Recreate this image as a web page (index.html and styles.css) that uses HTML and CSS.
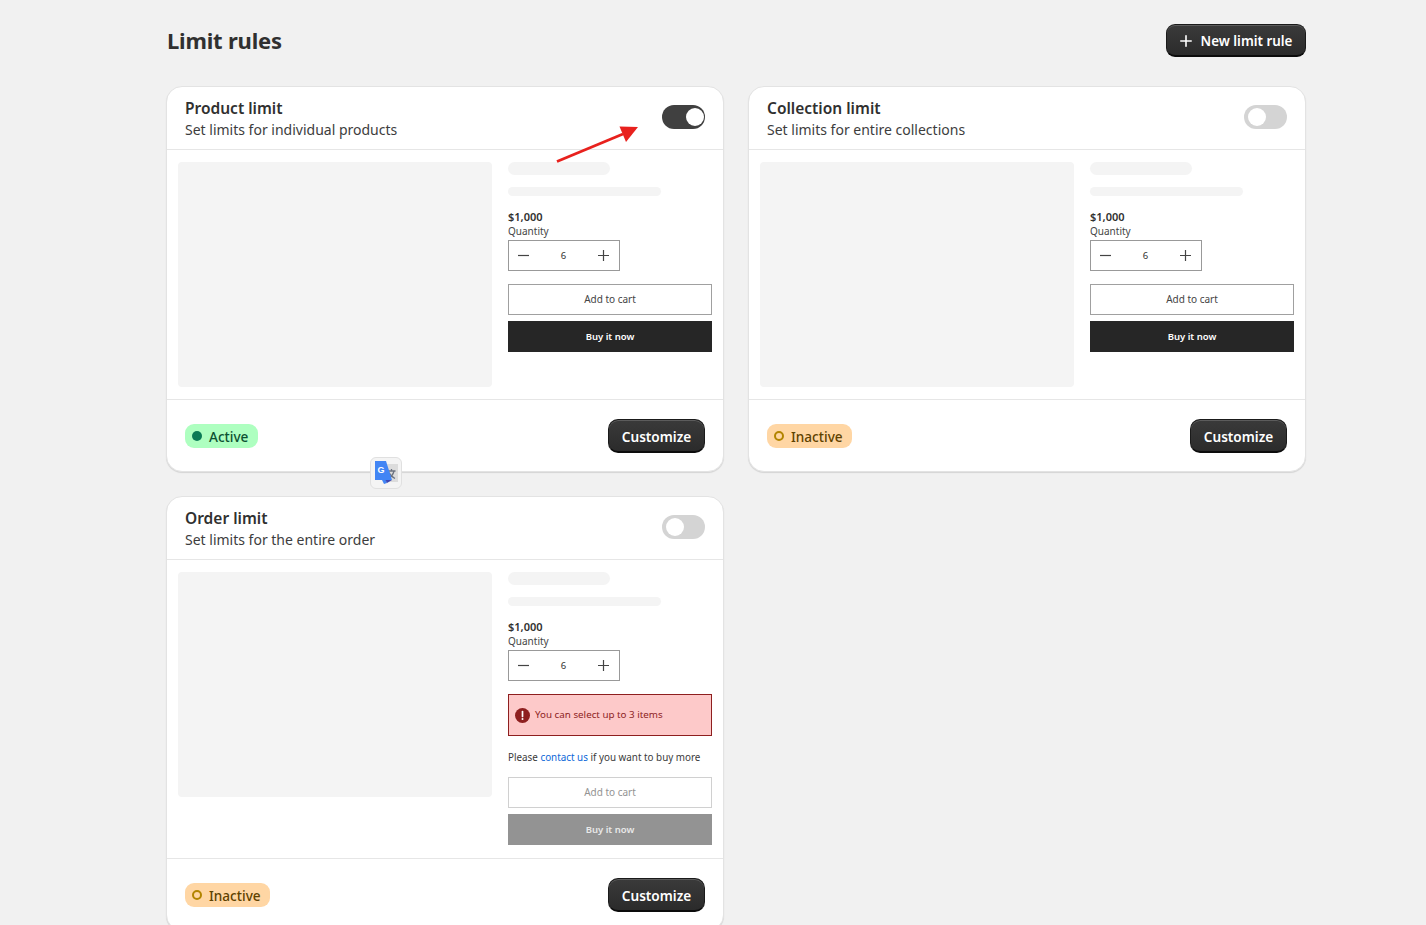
FILE: index.html
```html
<!DOCTYPE html>
<html lang="en">
<head>
  <meta charset="UTF-8" />
  <meta name="viewport" content="width=device-width, initial-scale=1.0"/>
  <title>Limit rules</title>
  <link rel="stylesheet" href="styles.css">
</head>
<body>
  <div class="page">
    <div class="topbar">
      <h1>Limit rules</h1>
      <button class="btn-dark btn-new">
        <svg class="plus-icon" width="12" height="12" viewBox="0 0 12 12"><path d="M6 .8v10.400M.8 6h10.400" stroke="#fff" stroke-width="1.600" stroke-linecap="round"/></svg>
        New limit rule
      </button>
    </div>

    <div class="cards">
      <!-- Product limit -->
      <div class="card">
        <div class="card-head">
          <div class="head-text">
            <h2>Product limit</h2>
            <p>Set limits for individual products</p>
          </div>
          <span class="toggle on"></span>
        </div>
        <div class="card-body">
          <div class="thumb"></div>
          <div class="info">
            <div class="skel skel-a"></div>
            <div class="skel skel-b"></div>
            <div class="price">$1,000</div>
            <div class="qty-label">Quantity</div>
            <div class="qty">
              <svg width="11" height="11" viewBox="0 0 11 11"><path d="M0 5.500h11" stroke="#444" stroke-width="1.200"/></svg>
              <span>6</span>
              <svg width="11" height="11" viewBox="0 0 11 11"><path d="M0 5.500h11M5.500 0v11" stroke="#444" stroke-width="1.200"/></svg>
            </div>
            <div class="shop-btn add">Add to cart</div>
            <div class="shop-btn buy">Buy it now</div>
          </div>
        </div>
        <div class="card-foot">
          <span class="badge active"><i></i>Active</span>
          <button class="btn-dark btn-custom">Customize</button>
        </div>
      </div>

      <!-- Collection limit -->
      <div class="card">
        <div class="card-head">
          <div class="head-text">
            <h2>Collection limit</h2>
            <p>Set limits for entire collections</p>
          </div>
          <span class="toggle"></span>
        </div>
        <div class="card-body">
          <div class="thumb"></div>
          <div class="info">
            <div class="skel skel-a"></div>
            <div class="skel skel-b"></div>
            <div class="price">$1,000</div>
            <div class="qty-label">Quantity</div>
            <div class="qty">
              <svg width="11" height="11" viewBox="0 0 11 11"><path d="M0 5.500h11" stroke="#444" stroke-width="1.200"/></svg>
              <span>6</span>
              <svg width="11" height="11" viewBox="0 0 11 11"><path d="M0 5.500h11M5.500 0v11" stroke="#444" stroke-width="1.200"/></svg>
            </div>
            <div class="shop-btn add">Add to cart</div>
            <div class="shop-btn buy">Buy it now</div>
          </div>
        </div>
        <div class="card-foot">
          <span class="badge inactive"><i></i>Inactive</span>
          <button class="btn-dark btn-custom">Customize</button>
        </div>
      </div>

      <!-- Order limit -->
      <div class="card">
        <div class="card-head">
          <div class="head-text">
            <h2>Order limit</h2>
            <p>Set limits for the entire order</p>
          </div>
          <span class="toggle"></span>
        </div>
        <div class="card-body">
          <div class="thumb"></div>
          <div class="info">
            <div class="skel skel-a"></div>
            <div class="skel skel-b"></div>
            <div class="price">$1,000</div>
            <div class="qty-label">Quantity</div>
            <div class="qty">
              <svg width="11" height="11" viewBox="0 0 11 11"><path d="M0 5.500h11" stroke="#444" stroke-width="1.200"/></svg>
              <span>6</span>
              <svg width="11" height="11" viewBox="0 0 11 11"><path d="M0 5.500h11M5.500 0v11" stroke="#444" stroke-width="1.200"/></svg>
            </div>
            <div class="error">
              <svg width="15" height="15" viewBox="0 0 15 15"><circle cx="7.500" cy="7.500" r="7.500" fill="#8e1f1f"/><path d="M7.500 3.500v5" stroke="#fff" stroke-width="1.700" stroke-linecap="round"/><circle cx="7.500" cy="11" r="1" fill="#fff"/></svg>
              <span class="error-text">You can select up to 3 items</span>
            </div>
            <div class="contact-note">Please <a href="#">contact us</a> if you want to buy more</div>
            <div class="shop-btn add disabled">Add to cart</div>
            <div class="shop-btn buy disabled">Buy it now</div>
          </div>
        </div>
        <div class="card-foot">
          <span class="badge inactive"><i></i>Inactive</span>
          <button class="btn-dark btn-custom">Customize</button>
        </div>
      </div>
    </div>

    <!-- annotation arrow -->
    <svg class="arrow" width="90" height="42" viewBox="0 0 90 42">
      <path d="M2 38.500L68 11" stroke="#e8211d" stroke-width="2.800"/>
      <path d="M83 4L64.500 3.500L71 19Z" fill="#e8211d"/>
    </svg>

    <!-- translate extension bubble -->
    <div class="translate">
      <svg width="24" height="26" viewBox="0 0 24 26">
        <rect x="11" y="4" width="13" height="18" fill="#dcdcdc"/>
        <path d="M17.500 9v1.500M13.500 11h8M20 11c-.8 3.500-3 6-6 7.500M15 12.500c1 2.500 3 4.500 6 6" stroke="#6b7280" stroke-width="1.300" fill="none"/>
        <path d="M1 1h11l6 19H12l1 3-3 1-2-4H1z" fill="#4285f4"/>
        <path d="M13 23l-1.500-3H18z" fill="#3b46b5"/>
        <text x="3.500" y="13" class="translate-g">G</text>
      </svg>
    </div>
  </div>
</body>
</html>
```

FILE: styles.css
```css
* {
  box-sizing: border-box;
}

html, body {
  margin: 0;
  height: 925px;
  overflow: hidden;
}

body {
  font-family: "Noto Sans", "Open Sans", Arial, sans-serif;
  background-color: #f1f1f1;
  color: #303030;
}

.page {
  position: relative;
  height: 925px;
  overflow: hidden;
  padding: 24px 120px 0 166px;
}

.topbar {
  display: flex;
  justify-content: space-between;
  align-items: center;
  height: 33px;
  margin-bottom: 29px;
}

.topbar h1 {
  margin: 0 0 2px 1px;
  font-size: 22px;
  font-weight: 700;
  letter-spacing: -0.2px;
  color: #303030;
}

.btn-dark {
  font-family: inherit;
  font-weight: 600;
  color: #fff;
  background: linear-gradient(#3a3a3a, #2b2b2b);
  border: 1px solid #1a1a1a;
  border-bottom: 2px solid #0c0c0c;
  box-shadow: inset 0 1px 0 #5c5c5c;
  cursor: pointer;
  padding: 1px 0 0;
}

.btn-new {
  display: flex;
  align-items: center;
  justify-content: center;
  gap: 9px;
  width: 140px;
  height: 33px;
  border-radius: 9px;
  font-size: 13.400px;
}

.cards {
  display: grid;
  grid-template-columns: 558px 558px;
  gap: 24px;
  align-items: start;
}

.card {
  background: #fff;
  border: 1px solid #e3e3e3;
  border-radius: 16px;
  box-shadow: 0 1px 1px rgba(0, 0, 0, 0.12);
}

.card-head {
  display: flex;
  justify-content: space-between;
  align-items: center;
  height: 63px;
  padding: 0 18px;
  border-bottom: 1px solid #e6e6e6;
}

.head-text {
  padding-top: 2px;
}

.card-head h2 {
  margin: 0;
  font-size: 15.500px;
  line-height: 21px;
  font-weight: 600;
  color: #303030;
}

.card-head p {
  margin: 1px 0 0;
  font-size: 14px;
  line-height: 20px;
  color: #3d3d3d;
}

.toggle {
  position: relative;
  display: block;
  width: 43px;
  height: 24px;
  margin-bottom: 2px;
  border-radius: 12px;
  background: #d4d4d4;
}

.toggle::after {
  content: "";
  position: absolute;
  top: 3px;
  left: 4px;
  width: 18px;
  height: 18px;
  border-radius: 50%;
  background: #fff;
}

.toggle.on {
  background: #404040;
}

.toggle.on::after {
  left: 24px;
}

.card-body {
  display: flex;
  gap: 16px;
  padding: 12px 11px;
  border-bottom: 1px solid #e6e6e6;
}

.thumb {
  width: 314px;
  height: 225px;
  flex: none;
  border-radius: 4px;
  background: #f4f4f4;
}

.info {
  flex: 1;
  padding-bottom: 1px;
}

.skel {
  background: #f4f4f4;
}

.skel-a {
  width: 102px;
  height: 13px;
  border-radius: 7px;
  margin-bottom: 12px;
}

.skel-b {
  width: 153px;
  height: 9px;
  border-radius: 5px;
  margin-bottom: 13px;
}

.price {
  font-size: 11px;
  line-height: 16px;
  font-weight: 600;
  color: #303030;
}

.qty-label {
  font-size: 10px;
  line-height: 12px;
  margin-bottom: 3px;
  color: #444;
}

.qty {
  display: flex;
  justify-content: space-between;
  align-items: center;
  width: 112px;
  height: 31px;
  padding: 0 10px 0 9px;
  border: 1px solid #999;
  font-size: 9.500px;
  color: #333;
}

.shop-btn {
  display: flex;
  align-items: center;
  justify-content: center;
  width: 204px;
  height: 31px;
  font-size: 10px;
}

.add {
  margin-top: 13px;
  padding-bottom: 2px;
  border: 1px solid #a0a0a0;
  color: #444;
}

.buy {
  margin-top: 6px;
  background: #262626;
  color: #fff;
  font-size: 9.500px;
  font-weight: 600;
}

.add.disabled {
  margin-top: 13px;
  border-color: #d0d0d0;
  color: #939393;
}

.buy.disabled {
  background: #939393;
  color: #e8e8e8;
}

.error {
  display: flex;
  align-items: center;
  gap: 5px;
  width: 204px;
  height: 42px;
  margin-top: 13px;
  padding-left: 6px;
  background: #fdc9c9;
  border: 1px solid #8e1f1f;
  font-size: 9.800px;
  color: #8e1f1f;
}

.error-text {
  margin-bottom: 2px;
}

.contact-note {
  margin-top: 14px;
  font-size: 9.850px;
  line-height: 14px;
  white-space: nowrap;
  color: #3a3a3a;
}

.contact-note a {
  color: #0a66d8;
  text-decoration: none;
}

.card-foot {
  display: flex;
  justify-content: space-between;
  align-items: center;
  height: 71px;
  padding: 0 18px;
}

.badge {
  display: flex;
  align-items: center;
  height: 24px;
  padding: 1px 10px 0 7px;
  border-radius: 9px;
  font-size: 13.600px;
  font-weight: 500;
}

.badge i {
  display: block;
  width: 10px;
  height: 10px;
  margin-top: -1px;
  margin-right: 7px;
  border-radius: 50%;
}

.badge.active {
  background: #aeffc0;
  color: #0c5132;
}

.badge.active i {
  background: #0b7a55;
}

.badge.inactive {
  padding-right: 9px;
  background: #ffd6a4;
  color: #5e4200;
}

.badge.inactive i {
  border: 2px solid #b28400;
}

.btn-custom {
  width: 97px;
  height: 34px;
  padding-top: 2px;
  border-radius: 10px;
  font-size: 13.600px;
}

.arrow {
  position: absolute;
  left: 555px;
  top: 123px;
}

.translate {
  position: absolute;
  left: 370px;
  top: 457px;
  display: flex;
  align-items: center;
  justify-content: center;
  width: 32px;
  height: 32px;
  border: 1px solid #e0e0e0;
  border-radius: 6px;
  background: #f4f4f4;
}

.translate-g {
  font-family: "Liberation Sans", Arial, sans-serif;
  font-size: 9px;
  font-weight: 700;
  fill: #fff;
}
```
